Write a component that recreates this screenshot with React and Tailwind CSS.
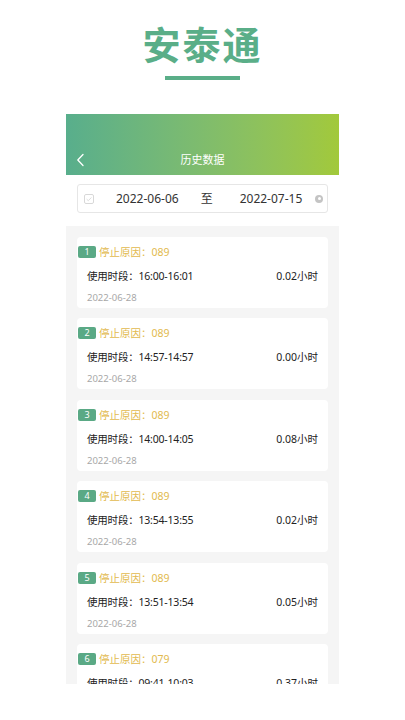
import React from "react";

const items = [
  { n: 1, reason: "089", span: "16:00-16:01", hours: "0.02" },
  { n: 2, reason: "089", span: "14:57-14:57", hours: "0.00" },
  { n: 3, reason: "089", span: "14:00-14:05", hours: "0.08" },
  { n: 4, reason: "089", span: "13:54-13:55", hours: "0.02" },
  { n: 5, reason: "089", span: "13:51-13:54", hours: "0.05" },
  { n: 6, reason: "079", span: "09:41-10:03", hours: "0.37" },
];

const font = { fontFamily: '"Noto Sans", "Noto Sans CJK SC", sans-serif' };

export default function App() {
  return (
    <div className="w-[405px] h-[720px] bg-white overflow-hidden flex flex-col items-center" style={font}>
      <div className="pt-[22px] text-[38px] leading-[44px] font-bold tracking-[2px] text-[#5aae88]">安泰通</div>
      <div className="mt-[10px] w-[75px] h-[4px] bg-[#5aae88]" />
      <div className="mt-[34px] w-[273px] h-[570px] overflow-hidden flex flex-col self-start ml-[66px]">
        <div className="h-[61px] shrink-0 bg-gradient-to-r from-[#58ae8c] to-[#a2c93a] relative flex items-end justify-center pb-[7px]">
          <svg className="absolute left-[10px] bottom-[8px]" width="9" height="14" viewBox="0 0 9 14" fill="none">
            <path d="M7 1.5 L1.8 7 L7 12.5" stroke="white" strokeWidth="1.3" strokeLinecap="round" strokeLinejoin="round" />
          </svg>
          <span className="text-white text-[11px] leading-[16px]">历史数据</span>
        </div>
        <div className="h-[51px] shrink-0 bg-white px-[11px] pt-[9px]">
          <div className="h-[29px] border border-[#e6e6e6] rounded-[3px] flex items-center pl-[6px] pr-[4px] text-[12px] text-[#333] whitespace-nowrap">
            <svg width="10" height="10" viewBox="0 0 10 10" fill="none" className="shrink-0">
              <rect x="0.5" y="0.5" width="9" height="9" rx="1.5" stroke="#d8d8d8" />
              <path d="M2.6 5.1 L4.3 6.7 L7.4 3.5" stroke="#d8d8d8" strokeWidth="0.9" fill="none" />
            </svg>
            <span className="ml-[22px]">2022-06-06</span>
            <span className="ml-[22px]">至</span>
            <span className="ml-[27px]">2022-07-15</span>
            <span className="ml-auto w-[8px] h-[8px] rounded-full bg-[#c4c4c4] flex items-center justify-center shrink-0">
              <span className="w-[3px] h-[3px] rounded-full bg-white" />
            </span>
          </div>
        </div>
        <div className="flex-1 bg-[#f5f5f5] px-[11px] pt-[11px] flex flex-col gap-[10.4px]">
          {items.map((it) => (
            <div key={it.n} className="h-[71px] shrink-0 bg-white rounded-[4px] pt-[9px] pl-[1px] pr-[10px] flex flex-col whitespace-nowrap">
              <div className="flex items-center h-[12px]">
                <span className="w-[18px] h-[12px] rounded-[2px] bg-[#5aa985] text-white text-[9px] leading-[12px] flex items-center justify-center">{it.n}</span>
                <span className="ml-[3px] text-[10.5px] leading-[14px] text-[#e2ba4e]">停止原因：{it.reason}</span>
              </div>
              <div className="mt-[10px] pl-[9px] flex items-center justify-between text-[10.5px] leading-[16px] text-[#222]">
                <span className="tracking-[-0.2px]">使用时段：{it.span}</span>
                <span>{it.hours}小时</span>
              </div>
              <div className="mt-[7px] pl-[9px] text-[9.5px] leading-[14px] text-[#a8a8a8]">2022-06-28</div>
            </div>
          ))}
        </div>
      </div>
    </div>
  );
}
